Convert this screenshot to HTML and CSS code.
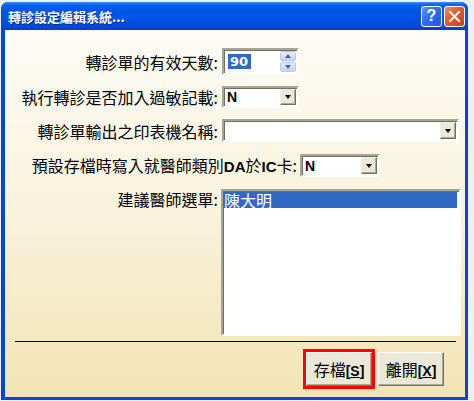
FILE: index.html
```html
<!DOCTYPE html>
<html lang="zh-Hant">

<head>
    <meta charset="UTF-8">
    <meta name="viewport" content="width=device-width, initial-scale=1.0">
    <title>轉診設定編輯系統</title>
    <link rel="stylesheet" href="styles.css">
</head>

<body>
    <div class="window">
        <div class="titlebar">
            <span class="title">轉診設定編輯系統...</span>
            <div class="caption-buttons">
                <span class="cap help">?</span>
                <span class="cap close">
                    <svg width="13" height="13" viewBox="0 0 13 13">
                        <path d="M2 2 L11 11 M11 2 L2 11" stroke="#fff" stroke-width="2.2" stroke-linecap="square" fill="none" />
                    </svg>
                </span>
            </div>
        </div>

        <div class="frame">
            <div class="client">
                <div class="row row-days">
                    <label class="label">轉診單的有效天數:</label>
                    <div class="field spin">
                        <div class="spin-text"><span class="selected-text">90</span></div>
                        <div class="spin-buttons">
                            <span class="spin-btn"><span class="arrow-up"></span></span>
                            <span class="spin-btn"><span class="arrow-down"></span></span>
                        </div>
                    </div>
                </div>

                <div class="row row-allergy">
                    <label class="label">執行轉診是否加入過敏記載:</label>
                    <div class="field combo combo-short">
                        <span class="combo-value">N</span>
                        <span class="drop-btn"><span class="arrow-down black"></span></span>
                    </div>
                </div>

                <div class="row row-printer">
                    <label class="label">轉診單輸出之印表機名稱:</label>
                    <div class="field combo combo-long">
                        <span class="combo-value"></span>
                        <span class="drop-btn"><span class="arrow-down black"></span></span>
                    </div>
                </div>

                <div class="row row-card">
                    <label class="label label-wide">預設存檔時寫入就醫師類別<b>DA</b>於<b>IC</b>卡:</label>
                    <div class="field combo combo-card">
                        <span class="combo-value">N</span>
                        <span class="drop-btn"><span class="arrow-down black"></span></span>
                    </div>
                </div>

                <div class="row row-doctor">
                    <label class="label label-top">建議醫師選單:</label>
                    <div class="field listbox">
                        <div class="list-item selected">陳大明</div>
                    </div>
                </div>

                <div class="separator"></div>

                <div class="footer">
                    <div class="focus-box">
                        <button class="btn">存檔<span class="key">[<u>S</u>]</span></button>
                    </div>
                    <button class="btn">離開<span class="key">[<u>X</u>]</span></button>
                </div>
            </div>
        </div>
    </div>
</body>

</html>
```

FILE: styles.css
```css
* {
    box-sizing: border-box;
}

body {
    margin: 0;
    width: 474px;
    height: 401px;
    overflow: hidden;
    background: #eef0f3;
    font-family: "Noto Sans CJK TC", "Liberation Sans", sans-serif;
}

.window {
    margin: 2px 0 0 1px;
    width: 467px;
    height: 398px;
    display: flex;
    flex-direction: column;
    border-radius: 7px 7px 0 0;
    overflow: hidden;
    background: #0846d6;
}

/* title bar */
.titlebar {
    height: 28px;
    flex-shrink: 0;
    display: flex;
    align-items: center;
    padding: 0 3px 0 7px;
    background: linear-gradient(to bottom, #3d8af5 0, #0a5fea 3px, #0056e6 8px, #0154e4 60%, #0149d9 88%, #003ec9 100%);
}

.title {
    flex: 1;
    color: #fff;
    font-size: 13px;
    font-weight: bold;
    text-shadow: 1px 1px 0 #0a2a8c;
    letter-spacing: 0;
}

.caption-buttons {
    display: flex;
    gap: 2px;
}

.cap {
    width: 21px;
    height: 21px;
    border: 1px solid #fff;
    border-radius: 3px;
    display: flex;
    align-items: center;
    justify-content: center;
    color: #fff;
}

.help {
    background: linear-gradient(135deg, #5e93f7 0%, #2f6ef0 45%, #1f58e0 100%);
    font-family: "Liberation Sans", sans-serif;
    font-weight: bold;
    font-size: 16px;
}

.close {
    background: linear-gradient(135deg, #f08a64 0%, #e2582c 45%, #c9401a 100%);
}

/* window body */
.frame {
    flex: 1;
    display: flex;
    padding: 0 3px 3px 4px;
}

.client {
    flex: 1;
    display: flex;
    flex-direction: column;
    padding-top: 18px;
    background: linear-gradient(to bottom, #fdfcf5 0%, #f9f2dc 50%, #f3e4b4 100%);
}

.row {
    display: flex;
    align-items: center;
    column-gap: 4px;
}

.row-allergy,
.row-printer {
    margin-top: 11px;
}

.row-card,
.row-doctor {
    margin-top: 12px;
}

.row-doctor {
    align-items: flex-start;
}

.label {
    width: 213px;
    flex-shrink: 0;
    text-align: right;
    font-size: 16px;
    line-height: 20px;
    color: #000;
    white-space: nowrap;
}

.label b {
    font-family: "Liberation Sans", sans-serif;
    font-size: 15px;
}

.label-wide {
    width: 292px;
    column-gap: 3px;
}

.row-card {
    column-gap: 3px;
}

.label-top {
    line-height: 20px;
}

/* sunken fields */
.field {
    background: #fff;
    border: 2px solid;
    border-color: #a7a596 #fdfdfb #fdfdfb #a7a596;
    box-shadow: inset 1px 1px 0 #716f64;
    display: flex;
}

.spin {
    width: 77px;
    height: 27px;
    padding: 1px 1px 1px 3px;
}

.spin-text {
    flex: 1;
    display: flex;
    align-items: center;
    padding-left: 1px;
}

.selected-text {
    background: #316ac5;
    color: #fff;
    font-family: "DejaVu Sans", sans-serif;
    font-weight: bold;
    font-size: 13px;
    line-height: 15px;
    padding: 0 3px 0 2px;
}

.spin-buttons {
    width: 16px;
    display: flex;
    flex-direction: column;
    gap: 1px;
}

.spin-btn {
    flex: 1;
    display: flex;
    align-items: center;
    justify-content: center;
    border: 1px solid #b6c8f4;
    border-radius: 2px;
    background: linear-gradient(to bottom, #e4ebfd, #c3d2fb);
}

.arrow-up,
.arrow-down {
    width: 0;
    height: 0;
    border-left: 3.5px solid transparent;
    border-right: 3.5px solid transparent;
}

.arrow-up {
    border-bottom: 4px solid #4d6185;
}

.arrow-down {
    border-top: 4px solid #4d6185;
}

.arrow-down.black {
    border-top-color: #000;
}

.combo {
    height: 22px;
    padding: 1px;
    align-items: stretch;
}

.combo-short {
    width: 77px;
}

.combo-long {
    width: 237px;
    height: 23px;
}

.combo-card {
    width: 80px;
    height: 23px;
}

.combo-value {
    flex: 1;
    display: flex;
    align-items: center;
    padding-left: 2px;
    font-family: "Liberation Sans", sans-serif;
    font-weight: bold;
    font-size: 14px;
}

.drop-btn {
    width: 16px;
    display: flex;
    align-items: center;
    justify-content: center;
    background: #ece9d8;
    border: 1px solid;
    border-color: #f1efe2 #716f64 #716f64 #f1efe2;
    box-shadow: inset -1px -1px 0 #aca899;
}

.listbox {
    width: 240px;
    height: 147px;
    margin-left: -1px;
    padding: 1px 2px 0 0;
    flex-direction: column;
}

.list-item {
    height: 16px;
    font-size: 16px;
    line-height: 16px;
    padding-left: 1px;
}

.list-item.selected {
    background: #316ac5;
    color: #fff;
}

/* bottom */
.separator {
    margin: 5px 9px 0 10px;
    height: 1px;
    background: #000;
}

.footer {
    margin-top: 7px;
    display: flex;
    justify-content: flex-end;
    align-items: center;
    gap: 3px;
    padding-right: 21px;
}

.focus-box {
    border: 3px solid #ff0000;
    display: flex;
}

.btn {
    width: 66px;
    height: 34px;
    padding: 0;
    font-family: "Noto Sans CJK TC", sans-serif;
    font-size: 16px;
    color: #000;
    background: #ebe8d7;
    border: 1px solid;
    border-color: #fff #716f64 #716f64 #fff;
    box-shadow: inset -1px -1px 0 #aca899;
}

.key {
    font-family: "Liberation Sans", sans-serif;
    font-weight: bold;
    font-size: 14px;
}
```
